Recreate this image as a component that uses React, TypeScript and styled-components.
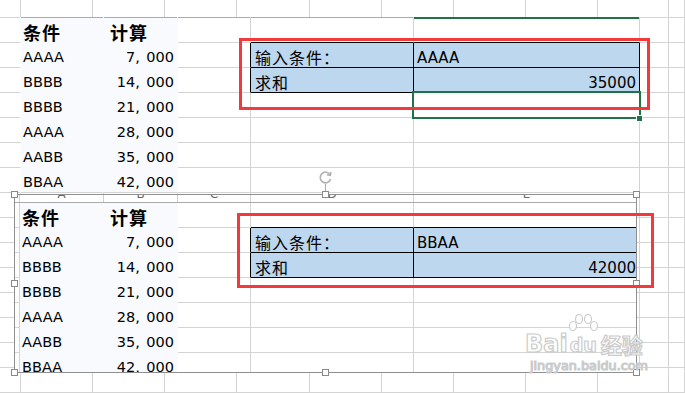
import styled, { createGlobalStyle } from 'styled-components';
import type { ReactNode } from 'react';

const GRID = '#d4d4d4';
const HEAVY = '#ababab';
const TABLE_BG = '#f8fafd';
const BLUE = '#bdd7ee';
const GREEN = '#217346';
const RED = '#f23a3c';
const FRAME = '#8f8f8f';

const LATIN = `"DejaVu Sans", "Noto Sans CJK SC", sans-serif`;
const CJK = `"Noto Sans CJK SC", "Noto Sans CJK JP", sans-serif`;

// source range A1:B7
const records = [
  { key: 'AAAA', amount: '7,000' },
  { key: 'BBBB', amount: '14,000' },
  { key: 'BBBB', amount: '21,000' },
  { key: 'AAAA', amount: '28,000' },
  { key: 'AABB', amount: '35,000' },
  { key: 'BBAA', amount: '42,000' },
];

const liveLookup = { key: 'AAAA', sum: '35000' };
const pictureLookup = { key: 'BBAA', sum: '42000' };

// default-width columns seen above and below the worksheet area
const STRIP_COLS = [21, 72, 72, 72, 73, 72, 72, 72, 72, 71];
const PIC_COLS = [5, 84, 74, 73, 163, 226];
const PIC_LETTERS = ['', 'A', 'B', 'C', 'D', 'E'];

const GlobalStyle = createGlobalStyle`
  html, body {
    margin: 0;
    padding: 0;
    background: #fff;
  }
  #root {
    width: 685px;
    height: 393px;
  }
`;

const Sheet = styled.div`
  position: relative;
  width: 685px;
  height: 393px;
  overflow: hidden;
  background: #fff;
  display: flex;
  flex-direction: column;
`;

const Strip = styled.div<{ $h: number; $line?: boolean }>`
  display: flex;
  flex-shrink: 0;
  height: ${(p) => p.$h}px;
  box-sizing: border-box;
  border-bottom: ${(p) => (p.$line ? `1px solid ${GRID}` : 'none')};
`;

const StripCell = styled.div<{ $w?: number }>`
  box-sizing: border-box;
  ${(p) => (p.$w ? `width: ${p.$w}px; flex-shrink: 0;` : 'flex: 1;')}
  border-right: 1px solid ${GRID};
`;

const Grid = styled.div`
  display: grid;
  flex-shrink: 0;
  grid-template-columns: 21px 83px 74px 73px 163px 226px 29px 1fr;
  grid-template-rows: 26px repeat(13, 25px) 4px;
  height: 355px;
  overflow: hidden;
`;

const Cell = styled.div<{
  $bg: string;
  $right: string;
  $bottom: string;
  $cap?: string;
  $capW?: number;
  $align: 'left' | 'right';
  $pad: number;
}>`
  box-sizing: border-box;
  min-width: 0;
  background: ${(p) => p.$bg};
  border-right: 1px solid ${(p) => p.$right};
  border-bottom: 1px solid ${(p) => p.$bottom};
  box-shadow: ${(p) => (p.$cap ? `inset 0 ${p.$capW ?? 1}px 0 ${p.$cap}` : 'none')};
  display: flex;
  align-items: flex-end;
  justify-content: ${(p) => (p.$align === 'right' ? 'flex-end' : 'flex-start')};
  padding-left: ${(p) => (p.$align === 'left' ? p.$pad : 0)}px;
  padding-right: ${(p) => (p.$align === 'right' ? p.$pad : 0)}px;
  overflow: hidden;
  white-space: nowrap;
  color: #000;
`;

const HeadText = styled.span`
  font-family: ${CJK};
  font-weight: 700;
  font-size: 18px;
  line-height: 20px;
  letter-spacing: 1px;
`;

const DataText = styled.span`
  font-family: ${LATIN};
  font-size: 14.5px;
  line-height: 17px;
  padding-bottom: 1px;
`;

const Comma = styled.span`
  margin-right: 6.5px;
`;

const LabelText = styled.span`
  font-family: ${CJK};
  font-size: 16px;
  line-height: 19px;
  letter-spacing: 1px;
`;

const ValueText = styled.span`
  font-family: ${LATIN};
  font-size: 15px;
  line-height: 17px;
`;

const Selection = styled.div`
  position: absolute;
  left: 412px;
  top: 91px;
  width: 229px;
  height: 28px;
  box-sizing: border-box;
  border: 2px solid ${GREEN};
`;

const FillHandle = styled.div`
  position: absolute;
  left: 637px;
  top: 116px;
  width: 5px;
  height: 5px;
  background: ${GREEN};
  box-shadow: 0 0 0 1px #fff;
`;

const Callout = styled.div<{ $x: number; $y: number; $w: number; $h: number }>`
  position: absolute;
  left: ${(p) => p.$x}px;
  top: ${(p) => p.$y}px;
  width: ${(p) => p.$w}px;
  height: ${(p) => p.$h}px;
  box-sizing: border-box;
  border: 3px solid ${RED};
  pointer-events: none;
`;

const PictureWrap = styled.div`
  position: absolute;
  left: 14px;
  top: 194px;
  width: 623px;
  height: 179px;
`;

const PictureBody = styled.div`
  width: 100%;
  height: 100%;
  box-sizing: border-box;
  border: 1px solid ${FRAME};
  background: #fff;
  overflow: hidden;
  display: flex;
  flex-direction: column;
`;

const ColHeader = styled.div`
  display: flex;
  flex-shrink: 0;
  height: 8px;
  box-sizing: border-box;
  border-bottom: 1px solid #a9a9a9;
`;

const ColHeaderCell = styled.div<{ $w: number }>`
  width: ${(p) => p.$w}px;
  flex-shrink: 0;
  box-sizing: border-box;
  border-right: 1px solid #d0d0d0;
  display: flex;
  justify-content: center;
  align-items: flex-end;
  overflow: hidden;
`;

const ColLetter = styled.span`
  font-family: ${LATIN};
  font-size: 12px;
  line-height: 12px;
  color: #6a6a6a;
  margin-bottom: 2px;
`;

const PicGrid = styled.div`
  display: grid;
  grid-template-columns: ${PIC_COLS.map((w) => `${w}px`).join(' ')};
  grid-template-rows: repeat(7, 25px);
`;

const Handle = styled.div<{ $x: number; $y: number }>`
  position: absolute;
  left: ${(p) => p.$x}px;
  top: ${(p) => p.$y}px;
  width: 7px;
  height: 7px;
  box-sizing: border-box;
  background: #fff;
  border: 1px solid #8a8a8a;
`;

const RotateStem = styled.div`
  position: absolute;
  left: 311px;
  top: -10px;
  width: 1px;
  height: 7px;
  background: #a8a8a8;
`;

const RotateKnob = styled.svg`
  position: absolute;
  left: 304px;
  top: -24px;
`;

const Watermark = styled.div`
  position: absolute;
  left: 525px;
  top: 314px;
  display: flex;
  flex-direction: column;
  color: rgba(255, 255, 255, 0.85);
  -webkit-text-stroke: 1.2px #cbcbcb;
  pointer-events: none;
`;

const MarkRow = styled.div`
  display: flex;
  align-items: flex-end;
`;

const MarkLatin = styled.span`
  font-family: ${LATIN};
  font-weight: 700;
  font-size: 24px;
  line-height: 24px;
`;

const Paw = styled.div`
  position: relative;
  width: 31px;
  height: 42px;
  display: flex;
  justify-content: center;
  align-items: flex-end;
`;

const PawToes = styled.svg`
  position: absolute;
  left: 0;
  top: 0;
`;

const PawText = styled.span`
  font-family: ${LATIN};
  font-weight: 700;
  font-size: 19px;
  line-height: 22px;
`;

const MarkCjk = styled.span`
  font-family: ${CJK};
  font-weight: 700;
  font-size: 21px;
  line-height: 24px;
  margin-left: 2px;
`;

const MarkUrl = styled.span`
  font-family: ${LATIN};
  font-size: 12.8px;
  line-height: 20px;
  margin-left: 5px;
`;

const Num = ({ v }: { v: string }) => {
  const [head, tail] = v.split(',');
  if (tail === undefined) return <>{v}</>;
  return (
    <>
      {head}
      <Comma>,</Comma>
      {tail}
    </>
  );
};

type Spec = {
  bg: string;
  right: string;
  bottom: string;
  align: 'left' | 'right';
  pad: number;
  content?: ReactNode;
};

const cellSpec = (
  r: number,
  c: number,
  lookup: { key: string; sum: string },
  inPicture: boolean,
): Spec => {
  const inTable = r <= 6 && (c === 1 || c === 2);
  const inBlue = (r === 1 || r === 2) && (c === 4 || c === 5);
  const spec: Spec = { bg: '#fff', right: GRID, bottom: GRID, align: 'left', pad: 2 };

  if (inTable) {
    spec.bg = TABLE_BG;
    spec.right = TABLE_BG;
    spec.bottom = r === 6 ? GRID : TABLE_BG;
  }
  if (inBlue) {
    spec.bg = BLUE;
    spec.right = '#000';
    spec.bottom = '#000';
  }
  if (c === 0 && r <= 6 && !inPicture) spec.right = '#fff';
  if (c === 3 && (r === 1 || r === 2)) spec.right = '#000';
  if (r === 0 && (c === 4 || c === 5)) spec.bottom = '#000';

  if (r === 0 && c === 1) spec.content = <HeadText>条件</HeadText>;
  if (r === 0 && c === 2) {
    spec.content = <HeadText>计算</HeadText>;
    spec.pad = 6;
  }
  if (r >= 1 && r <= 6 && c === 1) spec.content = <DataText>{records[r - 1].key}</DataText>;
  if (r >= 1 && r <= 6 && c === 2) {
    spec.content = (
      <DataText>
        <Num v={records[r - 1].amount} />
      </DataText>
    );
    spec.align = 'right';
    spec.pad = 3;
  }
  if (r === 1 && c === 4) {
    spec.content = <LabelText>输入条件：</LabelText>;
    spec.pad = 4;
  }
  if (r === 2 && c === 4) {
    spec.content = <LabelText>求和</LabelText>;
    spec.pad = 4;
  }
  if (r === 1 && c === 5) {
    spec.content = <ValueText>{lookup.key}</ValueText>;
    spec.pad = 3;
  }
  if (r === 2 && c === 5) {
    spec.content = <ValueText>{lookup.sum}</ValueText>;
    spec.align = 'right';
    spec.pad = 3;
  }
  return spec;
};

const topLine = (c: number) => {
  if (c === 5) return { cap: GREEN, capW: 2 };
  if (c >= 1 && c <= 4) return { cap: HEAVY, capW: 1 };
  return { cap: GRID, capW: 1 };
};

const App = () => {
  const sheetCells = [];
  for (let r = 0; r < 15; r++) {
    for (let c = 0; c < 8; c++) {
      const s = cellSpec(r, c, liveLookup, false);
      const line = r === 0 ? topLine(c) : { cap: undefined, capW: undefined };
      sheetCells.push(
        <Cell
          key={`${r}-${c}`}
          $bg={s.bg}
          $right={s.right}
          $bottom={r === 14 ? 'transparent' : s.bottom}
          $cap={line.cap}
          $capW={line.capW}
          $align={s.align}
          $pad={s.pad}
        >
          {s.content}
        </Cell>,
      );
    }
  }

  const pictureCells = [];
  for (let r = 0; r < 7; r++) {
    for (let c = 0; c < PIC_COLS.length; c++) {
      const s = cellSpec(r, c, pictureLookup, true);
      pictureCells.push(
        <Cell
          key={`p${r}-${c}`}
          $bg={s.bg}
          $right={s.right}
          $bottom={s.bottom}
          $align={s.align}
          $pad={s.pad}
        >
          {s.content}
        </Cell>,
      );
    }
  }

  const handleSpots = [
    [-3, -3], [308, -3], [619, -3],
    [-3, 86], [619, 86],
    [-3, 175], [308, 175], [619, 175],
  ];

  return (
    <>
      <GlobalStyle />
      <Sheet>
        <Strip $h={17}>
          {STRIP_COLS.map((w, i) => (
            <StripCell key={i} $w={w} />
          ))}
          <StripCell />
        </Strip>

        <Grid>{sheetCells}</Grid>

        <Strip $h={21} $line>
          {STRIP_COLS.map((w, i) => (
            <StripCell key={i} $w={w} />
          ))}
          <StripCell />
        </Strip>

        <Selection />
        <FillHandle />
        <Callout $x={239} $y={38} $w={411} $h={72} />

        <PictureWrap>
          <PictureBody>
            <ColHeader>
              {PIC_COLS.map((w, i) => (
                <ColHeaderCell key={i} $w={w}>
                  <ColLetter>{PIC_LETTERS[i]}</ColLetter>
                </ColHeaderCell>
              ))}
            </ColHeader>
            <PicGrid>{pictureCells}</PicGrid>
          </PictureBody>
          {handleSpots.map(([x, y], i) => (
            <Handle key={i} $x={x} $y={y} />
          ))}
          <RotateStem />
          <RotateKnob width="15" height="15" viewBox="0 0 15 15">
            <path d="M12.2 5 A5.3 5.3 0 1 0 12.6 9" fill="none" stroke="#b2b2b2" strokeWidth="1.7" />
            <path d="M12.9 1.8 L12.4 5.4 L8.9 4.7" fill="none" stroke="#b2b2b2" strokeWidth="1.5" />
          </RotateKnob>
        </PictureWrap>

        <Callout $x={237} $y={213} $w={417} $h={75} />

        <Watermark>
          <MarkRow>
            <MarkLatin>Bai</MarkLatin>
            <Paw>
              <PawToes width="31" height="22" viewBox="0 0 31 22">
                <g fill="rgba(255,255,255,0.85)" stroke="#cbcbcb" strokeWidth="1.2">
                  <ellipse cx="5" cy="12" rx="3.5" ry="4.5" />
                  <ellipse cx="11" cy="5" rx="3.5" ry="4.5" />
                  <ellipse cx="20" cy="5" rx="3.5" ry="4.5" />
                  <ellipse cx="26" cy="12" rx="3.5" ry="4.5" />
                </g>
              </PawToes>
              <PawText>du</PawText>
            </Paw>
            <MarkCjk>经验</MarkCjk>
          </MarkRow>
          <MarkUrl>jingyan.baidu.com</MarkUrl>
        </Watermark>
      </Sheet>
    </>
  );
};

export default App;
